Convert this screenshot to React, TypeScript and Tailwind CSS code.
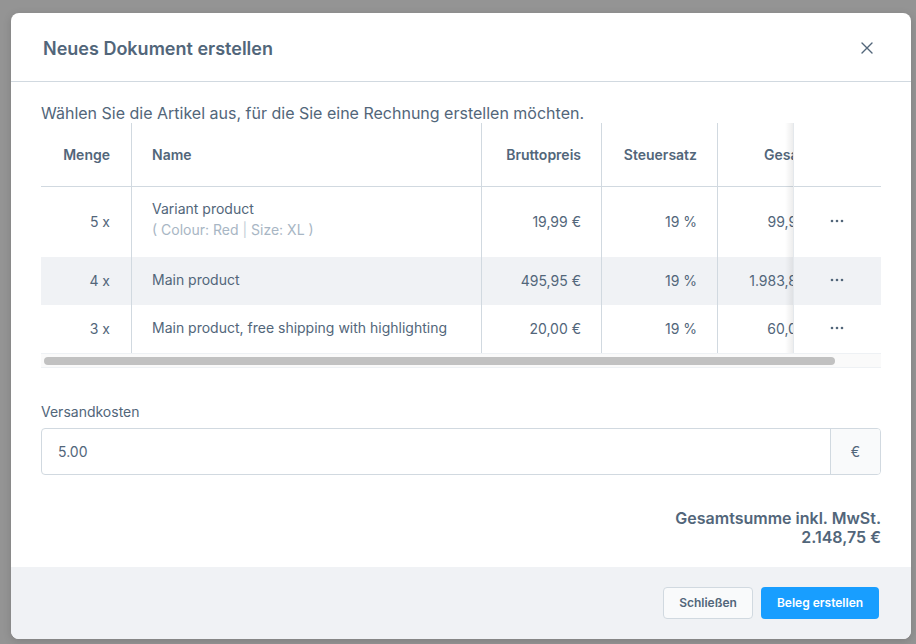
import React from 'react';

type Row = {
  qty: string;
  name: string;
  variant?: string;
  price: string;
  tax: string;
  total: string;
  striped?: boolean;
};

const rows: Row[] = [
  { qty: '5 x', name: 'Variant product', variant: 'Colour: Red | Size: XL', price: '19,99 €', tax: '19 %', total: '99,95 €' },
  { qty: '4 x', name: 'Main product', price: '495,95 €', tax: '19 %', total: '1.983,80 €', striped: true },
  { qty: '3 x', name: 'Main product, free shipping with highlighting', price: '20,00 €', tax: '19 %', total: '60,00 €' },
];

const CloseIcon = () => (
  <svg width="12" height="12" viewBox="0 0 12 12" fill="none" aria-hidden="true">
    <path d="M1 1L11 11M11 1L1 11" stroke="#52667a" strokeWidth="1.4" strokeLinecap="round" />
  </svg>
);

const Dots = () => (
  <svg width="14" height="4" viewBox="0 0 14 4" aria-hidden="true">
    <circle cx="2" cy="2" r="1.3" fill="#52667a" />
    <circle cx="7" cy="2" r="1.3" fill="#52667a" />
    <circle cx="12" cy="2" r="1.3" fill="#52667a" />
  </svg>
);

const cellBase = 'flex items-center border-r border-[#d1d9e0]';

const DocumentTable = () => (
  <div className="border-b border-[#eef1f4]">
    <div className="relative">
      {/* header */}
      <div className="flex h-[64px] border-b border-[#d1d9e0] text-[14px] font-semibold text-[#52667a]">
        <div className={`${cellBase} w-[91px] justify-end pr-[21px]`}>Menge</div>
        <div className={`${cellBase} w-[350px] pl-[20px]`}>Name</div>
        <div className={`${cellBase} w-[120px] justify-end pr-[20px]`}>Bruttopreis</div>
        <div className={`${cellBase} w-[116px] justify-end pr-[20px]`}>Steuersatz</div>
        <div className="w-[75px] overflow-hidden">
          <div className="flex h-full w-[120px] items-center justify-end pr-[22px]">Gesamt</div>
        </div>
        <div className="flex-1" />
      </div>
      {rows.map((r) => (
        <div
          key={r.name}
          className={`flex text-[14px] text-[#52667a] ${r.variant ? 'h-[70px]' : 'h-[48px]'} ${r.striped ? 'bg-[#f0f2f5]' : 'bg-white'}`}
        >
          <div className={`${cellBase} w-[91px] justify-end pr-[21px] pb-[2px]`}>{r.qty}</div>
          <div className={`${cellBase} w-[350px] flex-col items-start justify-center pl-[20px] ${r.variant ? 'pb-[6px]' : 'pb-[2px]'}`}>
            <span className="leading-[20px]">{r.name}</span>
            {r.variant && (
              <span className="mt-[1px] leading-[20px] text-[#a8b6c4]">
                ( Colour: Red <span className="text-[#c4ced8]">|</span> Size: XL )
              </span>
            )}
          </div>
          <div className={`${cellBase} w-[120px] justify-end pr-[20px] pb-[2px]`}>{r.price}</div>
          <div className={`${cellBase} w-[116px] justify-end pr-[20px] pb-[2px]`}>{r.tax}</div>
          <div className="w-[75px] overflow-hidden">
            <div className="flex h-full w-[120px] items-center justify-end whitespace-nowrap pb-[2px] pr-[19px]">{r.total}</div>
          </div>
          <div className="flex flex-1 items-center justify-center pb-[2px]">
            <Dots />
          </div>
        </div>
      ))}
      {/* sticky column shadow */}
      <div className="pointer-events-none absolute left-[744px] top-0 bottom-0 w-[8px] bg-gradient-to-r from-transparent to-[#00000012]" />
      <div className="pointer-events-none absolute left-[752px] top-0 bottom-0 w-px bg-[#e4e8ec]" />
    </div>
    {/* horizontal scrollbar */}
    <div className="flex h-[14px] items-center border-t border-[#eef1f4] bg-[#fafafa] px-[3px]">
      <div className="h-[8px] w-[791px] rounded-full bg-[#c1c1c1]" />
    </div>
  </div>
);

export default function App() {
  return (
    <div className="h-[644px] w-[916px] overflow-hidden bg-[#949494] pl-[11px] pt-[13px]" style={{ fontFamily: 'Inter, "Noto Sans", sans-serif' }}>
      <div className="flex h-[626px] w-[900px] flex-col overflow-hidden rounded-[8px] bg-white shadow-[0_2px_8px_rgba(0,0,0,0.15)]">
        <div className="flex h-[69px] shrink-0 items-center justify-between border-b border-[#d1d9e0] pl-[32px] pr-[38px] pt-[2px]">
          <h2 className="text-[18px] font-semibold text-[#52667a]">Neues Dokument erstellen</h2>
          <CloseIcon />
        </div>

        <div className="flex flex-1 flex-col px-[30px]">
          <p className="pt-[22px] text-[16px] leading-[19px] text-[#52667a]">
            Wählen Sie die Artikel aus, für die Sie eine Rechnung erstellen möchten.
          </p>
          <DocumentTable />

          <label className="mt-[34px] text-[14px] leading-[20px] text-[#52667a]">Versandkosten</label>
          <div className="mt-[6px] flex h-[47px] overflow-hidden rounded-[4px] border border-[#d1d9e0]">
            <div className="flex flex-1 items-center pl-[16px] text-[14px] text-[#52667a]">5.00</div>
            <div className="flex w-[50px] items-center justify-center border-l border-[#d1d9e0] bg-[#f9fafb] text-[14px] text-[#52667a]">€</div>
          </div>

          <div className="mt-[34px] flex flex-col items-end text-[16px] font-semibold leading-[19px] text-[#52667a]">
            <span>Gesamtsumme inkl. MwSt.</span>
            <span>2.148,75 €</span>
          </div>
        </div>

        <div className="flex h-[72px] shrink-0 items-center justify-end gap-[8px] bg-[#f0f2f5] pr-[32px]">
          <button className="h-[32px] w-[90px] rounded-[4px] border border-[#d1d9e0] bg-[#f9fafb] text-[12px] font-semibold text-[#52667a]">
            Schließen
          </button>
          <button className="h-[32px] w-[118px] rounded-[4px] bg-[#189eff] text-[12px] font-semibold text-white">
            Beleg erstellen
          </button>
        </div>
      </div>
    </div>
  );
}
